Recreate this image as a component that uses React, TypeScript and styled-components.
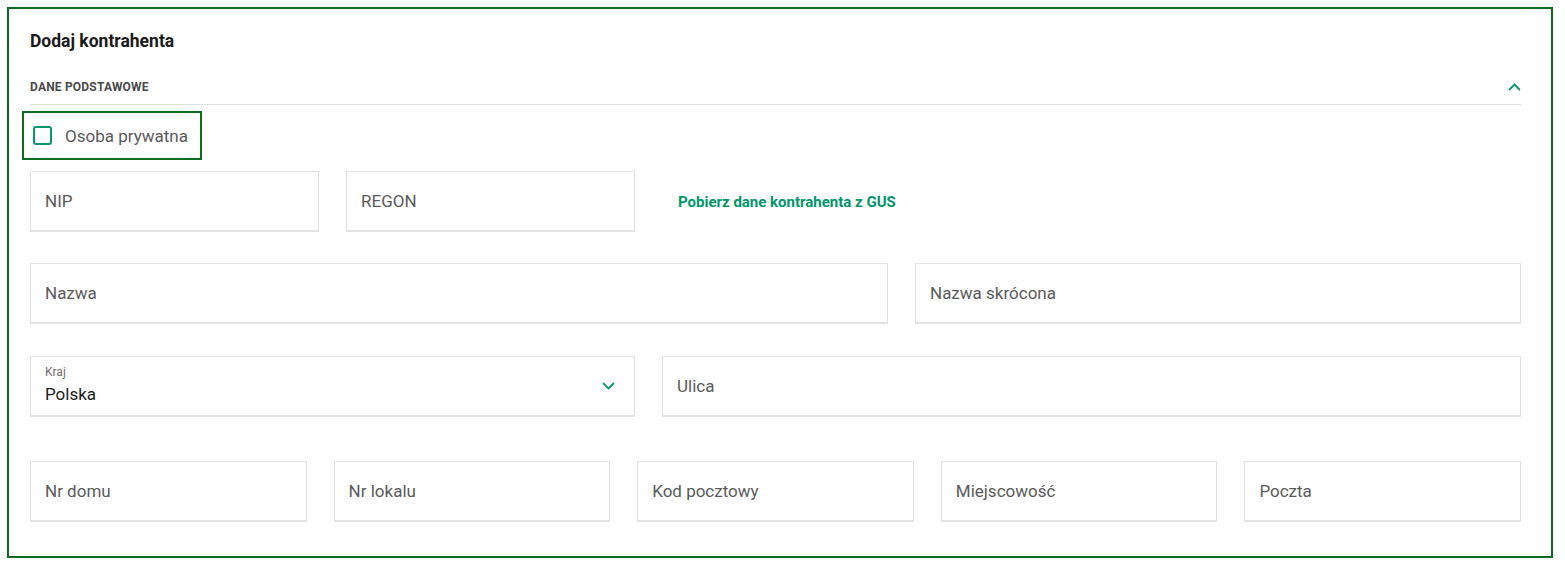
import React, { FC } from "react";
import styled, { createGlobalStyle } from "styled-components";

const GlobalStyle = createGlobalStyle`
  * { box-sizing: border-box; }
  body {
    margin: 0;
    background: #fff;
    font-family: Roboto, "Liberation Sans", sans-serif;
  }
`;

const Card = styled.div`
  margin: 7px 0 0 7px;
  width: 1546px;
  height: 551px;
  border: 2px solid #0d6b22;
  padding: 22px 30px 0 21px;
`;

const Title = styled.h2`
  margin: 0;
  font-size: 17.5px;
  font-weight: 700;
  color: #1a1a1a;
  line-height: 20px;
`;

const SectionHeader = styled.div`
  display: flex;
  align-items: center;
  justify-content: space-between;
  margin-top: 19px;
  height: 35px;
  border-bottom: 1px solid #e0e0e0;
`;

const SectionTitle = styled.span`
  font-size: 12px;
  font-weight: 700;
  color: #4a4a4a;
  letter-spacing: 0.2px;
`;

const CheckWrap = styled.label`
  display: inline-flex;
  align-items: center;
  gap: 13px;
  margin: 6px 0 0 -8px;
  height: 49px;
  padding: 0 12px 0 9px;
  border: 2px solid #0d6b22;
  font-size: 17px;
  color: #5a5a5a;
`;

const Box = styled.span`
  width: 19px;
  height: 19px;
  border: 2px solid #0a9470;
  border-radius: 3px;
`;

const Grid = styled.div<{ $cols: string; $mt: number }>`
  display: grid;
  grid-template-columns: ${(p) => p.$cols};
  column-gap: 27px;
  margin-top: ${(p) => p.$mt}px;
  align-items: center;
`;

const Field = styled.div`
  height: 61px;
  border: 1px solid #e2e2e2;
  border-bottom-width: 2px;
  padding: 0 14px;
  display: flex;
  flex-direction: column;
  justify-content: center;
  position: relative;
  font-size: 17px;
  color: #5a5a5a;
`;

const SmallLabel = styled.span`
  font-size: 12px;
  color: #707070;
  line-height: 14px;
  margin-top: -2px;
`;

const Value = styled.span`
  font-size: 17px;
  color: #1a1a1a;
  line-height: 22px;
  margin-top: 4px;
`;

const SelectChevron = styled.span`
  position: absolute;
  right: 19px;
  top: 25px;
  display: flex;
`;

const Link = styled.a`
  font-size: 15px;
  font-weight: 700;
  color: #00976a;
  margin-left: 16px;
  cursor: pointer;
`;

const Chevron: FC<{ up?: boolean }> = ({ up }) => (
  <svg width="13" height="8" viewBox="0 0 13 8" fill="none">
    <path
      d={up ? "M1 7L6.5 1.5L12 7" : "M1 1L6.5 6.5L12 1"}
      stroke="#0a9470"
      strokeWidth="1.8"
    />
  </svg>
);

const Input: FC<{ label: string }> = ({ label }) => <Field>{label}</Field>;

const App: FC = () => (
  <>
    <GlobalStyle />
    <Card>
      <Title>Dodaj kontrahenta</Title>
      <SectionHeader>
        <SectionTitle>DANE PODSTAWOWE</SectionTitle>
        <Chevron up />
      </SectionHeader>
      <CheckWrap>
        <Box />
        Osoba prywatna
      </CheckWrap>
      <Grid $cols="289px 289px 1fr" $mt={11}>
        <Input label="NIP" />
        <Input label="REGON" />
        <Link>Pobierz dane kontrahenta z GUS</Link>
      </Grid>
      <Grid $cols="858px 1fr" $mt={31}>
        <Input label="Nazwa" />
        <Input label="Nazwa skrócona" />
      </Grid>
      <Grid $cols="605px 1fr" $mt={32}>
        <Field>
          <SmallLabel>Kraj</SmallLabel>
          <Value>Polska</Value>
          <SelectChevron>
            <Chevron />
          </SelectChevron>
        </Field>
        <Input label="Ulica" />
      </Grid>
      <Grid $cols="repeat(5, 1fr)" $mt={44}>
        <Input label="Nr domu" />
        <Input label="Nr lokalu" />
        <Input label="Kod pocztowy" />
        <Input label="Miejscowość" />
        <Input label="Poczta" />
      </Grid>
    </Card>
  </>
);

export default App;
